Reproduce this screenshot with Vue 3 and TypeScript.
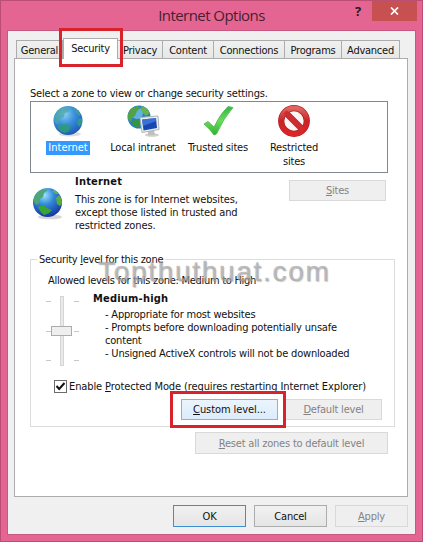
<script setup lang="ts">
interface Tab { id: string; label: string }
const tabs: Tab[] = [
  { id: 'general', label: 'General' },
  { id: 'security', label: 'Security' },
  { id: 'privacy', label: 'Privacy' },
  { id: 'content', label: 'Content' },
  { id: 'connections', label: 'Connections' },
  { id: 'programs', label: 'Programs' },
  { id: 'advanced', label: 'Advanced' },
]
const active = 'security'
</script>

<template>
  <div class="window">
    <header class="titlebar">
      <h1>Internet Options</h1>
      <span class="help">?</span>
      <span class="close">
        <svg width="9" height="8" viewBox="0 0 9 8"><path d="M1 .5L8 7.5M8 .5L1 7.5" stroke="#fff" stroke-width="1.7" /></svg>
      </span>
    </header>

    <main class="client">
      <nav class="tabs">
        <div v-for="t in tabs" :key="t.id" class="tab" :class="[t.id, { active: t.id === active }]">
          <span>{{ t.label }}</span>
        </div>
        <div class="mark mark-tab"></div>
      </nav>

      <section class="panel">
        <p class="prompt">Select a zone to view or change security settings.</p>
        <div class="zones">
          <div class="zone z1">
            <svg width="32" height="32" viewBox="0 0 32 32">
              <defs>
                <radialGradient id="sea" cx=".38" cy=".28" r=".75">
                  <stop offset="0" stop-color="#8fd0f5" /><stop offset=".45" stop-color="#3b92dc" /><stop offset="1" stop-color="#1c59b4" />
                </radialGradient>
              </defs>
              <ellipse cx="18" cy="29" rx="11" ry="2.5" fill="#bbb" opacity=".5" />
              <circle cx="16" cy="15.500" r="14.500" fill="url(#sea)" />
              <path d="M3 9Q7 2 14 2L19 4 16 7 13 8 12 12 8 14 6 19 3 18 2 13Z" fill="#4da7a5" opacity=".75" />
              <path d="M21 2Q27 5 29 10L27 11 23 7Z" fill="#45a39b" opacity=".7" />
              <path d="M7 20L14 19 19 22 17 26 13 28Q8 27 6 23Z" fill="#2d9d75" opacity=".85" />
              <path d="M26 14L30 13 30 19 27 22 25 18Z" fill="#2fa088" opacity=".85" />
            </svg>
            <span class="selected">Internet</span>
          </div>
          <div class="zone z2">
            <svg width="34" height="32" viewBox="0 0 34 32">
              <circle cx="13" cy="12" r="11.500" fill="#287fc8" />
              <circle cx="11" cy="8" r="6" fill="#7cc6ec" opacity=".7" />
              <path d="M2 9Q5 2 11 1L15 3 11 6 9 11 6 13 5 17 2 14Z" fill="#50a447" />
              <path d="M15 1Q21 2 24 8L20 11 16 7Z" fill="#68b34b" />
              <path d="M5 17L11 14 15 17 13 22Q8 23 5 17Z" fill="#36963f" />
              <ellipse cx="26" cy="30" rx="7" ry="1.700" fill="#d0d0ca" />
              <path d="M22 26L28 25 29 30 22 30Z" fill="#bdc1ba" />
              <path d="M14 12.500L32 11 33 24.500 16 27.500Z" fill="#edf1ed" stroke="#aeb4b4" />
              <path d="M16 14.500L30 13 31 23 17.500 25.500Z" fill="#1747b5" />
              <path d="M16 14.500L30 13 30.200 16 17 21Z" fill="#4d83e0" opacity=".7" />
            </svg>
            <span>Local intranet</span>
          </div>
          <div class="zone z3">
            <svg width="32" height="32" viewBox="0 0 32 32">
              <defs><linearGradient id="tick" x2="0" y2="1"><stop stop-color="#36b44b" /><stop offset=".5" stop-color="#6cdb5b" /><stop offset="1" stop-color="#31af31" /></linearGradient></defs>
              <path d="M2 19L6 16.500 12 22Q18 9 26 1.500L31 2.500Q21 14 14.500 29L12 30Q8 24 2 19Z" fill="url(#tick)" stroke="#45b951" stroke-width=".8" />
            </svg>
            <span>Trusted sites</span>
          </div>
          <div class="zone z4">
            <svg width="32" height="32" viewBox="0 0 32 32">
              <defs><linearGradient id="stop" x2="0" y2="1"><stop stop-color="#df6560" /><stop offset=".5" stop-color="#c72427" /><stop offset="1" stop-color="#df2326" /></linearGradient></defs>
              <circle cx="16" cy="16" r="12.800" fill="#f9f5f5" stroke="#b52024" stroke-width="6.200" />
              <path d="M7.500 7.500L24.500 24.500" stroke="#b52024" stroke-width="6.200" />
              <circle cx="16" cy="16" r="12.800" fill="none" stroke="url(#stop)" stroke-width="4.700" />
              <path d="M7 7L25 25" stroke="#d02c2f" stroke-width="4.600" />
            </svg>
            <span>Restricted<br>sites</span>
          </div>
        </div>

        <div class="info">
          <svg class="globe" width="32" height="33" viewBox="0 0 32 33">
            <defs>
              <radialGradient id="deep" cx=".4" cy=".25" r=".8">
                <stop offset="0" stop-color="#9de3fa" /><stop offset=".4" stop-color="#3289da" /><stop offset="1" stop-color="#152d9c" />
              </radialGradient>
            </defs>
            <ellipse cx="18" cy="30" rx="12" ry="2.300" fill="#bbb" opacity=".6" />
            <circle cx="15.500" cy="15.500" r="14.500" fill="url(#deep)" />
            <path d="M2 10Q6 3 12 2L16 3 12 6 11 10 8 12 7 16 4 18 2 15Z" fill="#4da67a" />
            <path d="M24 11L27 8 29 11 30 16 28 19 25 17Z" fill="#58ad42" />
            <path d="M21 2.500Q25 4 27 7L24 7 21 5Z" fill="#5db268" />
            <path d="M6 20L11 18 15 21 20 23 17 26 12 28Q8 25 6 20Z" fill="#38a532" />
          </svg>
          <div class="info-text">
            <h2>Internet</h2>
            <p>This zone is for Internet websites,<br>except those listed in trusted and<br>restricted zones.</p>
          </div>
          <button class="btn disabled sites"><span><u>S</u>ites</span></button>
        </div>

        <div class="group">
          <div class="legend">Security <u>l</u>evel for this zone</div>
          <p class="allowed">Allowed levels for this zone: Medium to High</p>
          <div class="level">
            <svg class="slider" width="34" height="72" viewBox="0 0 34 72">
              <rect x="14.500" y=".5" width="3" height="69" fill="#e9ebeb" stroke="#d4d6d6" />
              <path d="M0 5.500H5M28 5.500H33M0 35.500H5M28 35.500H33M0 64.500H5M28 64.500H33" stroke="#c8c8c8" />
              <rect x="5.500" y="30.500" width="20" height="9" fill="#efefef" stroke="#acacac" />
            </svg>
            <div class="level-text">
              <h2>Medium-high</h2>
              <p>- Appropriate for most websites</p>
              <p>- Prompts before downloading potentially unsafe<br>content</p>
              <p>- Unsigned ActiveX controls will not be downloaded</p>
            </div>
          </div>
          <div class="protect">
            <span class="check"><svg width="11" height="11" viewBox="0 0 11 11"><path d="M1.500 5L4.200 8 9.500 2" fill="none" stroke="#111" stroke-width="2" /></svg></span>
            <span class="plabel">Enable <u>P</u>rotected Mode (requires restarting Internet Explorer)</span>
          </div>
          <div class="actions">
            <button class="btn hot custom"><span><u>C</u>ustom level...</span></button>
            <button class="btn disabled default"><span><u>D</u>efault level</span></button>
            <div class="mark mark-custom"></div>
          </div>
          <div class="watermark">Topthuthuat.com</div>
        </div>

        <button class="btn disabled reset"><span><u>R</u>eset all zones to default level</span></button>
      </section>

      <footer class="footer">
        <button class="btn ok"><span>OK</span></button>
        <button class="btn"><span>Cancel</span></button>
        <button class="btn disabled"><span><u>A</u>pply</span></button>
      </footer>
    </main>
  </div>
</template>

<style>
body { margin: 0; overflow: hidden; }
</style>

<style scoped>
* { box-sizing: border-box; }
h1, h2, p { margin: 0; }
svg { display: block; flex: none; }
u { text-decoration: underline; text-underline-offset: 1px; text-decoration-thickness: 1px; text-decoration-skip-ink: none; }
.window {
  width: 423px; height: 542px; padding: 0 7px 7px; background: #e56592; border: 1px solid #bd4e73;
  font: 11px/13px "DejaVu Sans Condensed", "DejaVu Sans", sans-serif; font-stretch: condensed; letter-spacing: -.18px; color: #111; white-space: nowrap;
}
.titlebar { height: 30px; display: flex; position: relative; justify-content: center; }
h1 { font: 15px/28px "Open Sans", sans-serif; color: #4a1e30; letter-spacing: -.55px; }
.help { position: absolute; right: 54px; top: 1px; font: bold 13px/19px "Open Sans", sans-serif; color: #321421; }
.close { position: absolute; right: -2px; top: 0; width: 45px; height: 20px; background: #c75050; display: flex; align-items: center; justify-content: center; }
.client { width: 407px; height: 503px; background: #f0f0f0; outline: 1px solid #c75880; padding: 7px 6px 0; }
.tabs { display: flex; position: relative; align-items: flex-end; height: 20px; padding-left: 2px; letter-spacing: -.25px; }
.tab { height: 18px; border: 1px solid #acacac; border-left-width: 0; border-bottom: 0; background: linear-gradient(#f0f0f0, #e6e8e8); display: flex; justify-content: center; line-height: 19px; }
.general { width: 47px; border-left-width: 1px; }
.security { width: 55px; }
.privacy { width: 45px; }
.content { width: 51px; }
.connections { width: 71px; }
.programs { width: 57px; }
.advanced { width: 58px; }
.active { height: 21px; margin-bottom: -1px; background: #fff; z-index: 1; border-left-width: 1px; line-height: 20px; }
.mark { position: absolute; border: 3px solid #d8232c; z-index: 3; }
.mark-tab { left: 45px; top: -10px; width: 64px; height: 39px; }
.panel { width: 394px; height: 439px; background: #fff; border: 1px solid #acacac; padding: 28px 11px 0 15px; }
.prompt { height: 14px; }
.zones { width: 358px; height: 72px; border: 1px solid #828790; display: flex; }
.zone { display: flex; flex-direction: column; align-items: center; width: 72px; margin-top: 3px; text-align: center; }
.zone span { margin-top: 4px; line-height: 14px; }
.z1 { margin-left: 1px; }
.z2 { margin-left: 3px; }
.z3 { margin-left: 3px; }
.z4 { margin-left: 4px; }
.zone .selected { background: #3399ff; color: #fff; padding: 0 2px; letter-spacing: 0; }
.info { display: flex; height: 86px; padding-top: 2px; }
.globe { margin: 12px 0 0 2px; }
.info-text { width: 214px; margin-left: 11px; letter-spacing: -.12px; }
h2 { font: bold 11px/14px "DejaVu Sans Condensed", sans-serif; font-stretch: condensed; letter-spacing: .2px; }
.info-text p { margin-top: 4px; }
.btn { font: inherit; letter-spacing: -.2px; color: #111; height: 21px; padding: 0; border: 1px solid #acacac; background: linear-gradient(#f1f1f1, #e5e5e5); width: 73px; line-height: 19px; text-align: center; }
.btn.disabled { background: #efefef; border-color: #d9d9d9; color: #838383; }
.btn.hot { border-color: #7eb4ea; background: linear-gradient(#ebf4fc, #dcecfc); letter-spacing: -.08px; }
.btn.ok { border-color: #3c8fd4; }
.btn.sites { width: 97px; margin-top: 5px; }
.group { position: relative; width: 365px; height: 168px; border: 1px solid #dcdcdc; }
.legend { width: max-content; margin: -7px 0 0 6px; padding: 0 2px; background: #fff; letter-spacing: -.28px; }
.allowed { margin: 8px 0 0 17px; letter-spacing: -.28px; }
.level { display: flex; margin-top: 9px; padding-left: 15px; }
.slider { margin-top: 0; }
.level-text { margin-left: 13px; margin-top: -4px; }
.level-text h2 { height: 16px; }
.level-text p { margin-left: 12px; letter-spacing: -.19px; }
.protect { display: flex; margin: 12px 0 0 23px; height: 13px; }
.check { width: 13px; height: 13px; border: 1px solid #6b6b6b; }
.plabel { margin-left: 2px; letter-spacing: -.11px; }
.actions { position: absolute; left: 150px; top: 139px; display: flex; gap: 7px; }
.actions .btn { width: 97px; }
.mark-custom { left: -11px; top: -8px; width: 116px; height: 37px; }
.watermark { position: absolute; left: 67px; top: -4px; font: 28px/32px "Liberation Sans", sans-serif; letter-spacing: 1.700px; color: rgba(165, 165, 165, .65); text-shadow: 1px 1px 1px rgba(120, 120, 120, .35); -webkit-text-stroke: .7px rgba(165, 165, 165, .5); }
.reset { display: block; width: 193px; height: 22px; margin: 5px 0 0 165px; }
.footer { display: flex; gap: 8px; margin: 8px 0 0 159px; }
.footer .btn { height: 22px; width: 73px; }
</style>
